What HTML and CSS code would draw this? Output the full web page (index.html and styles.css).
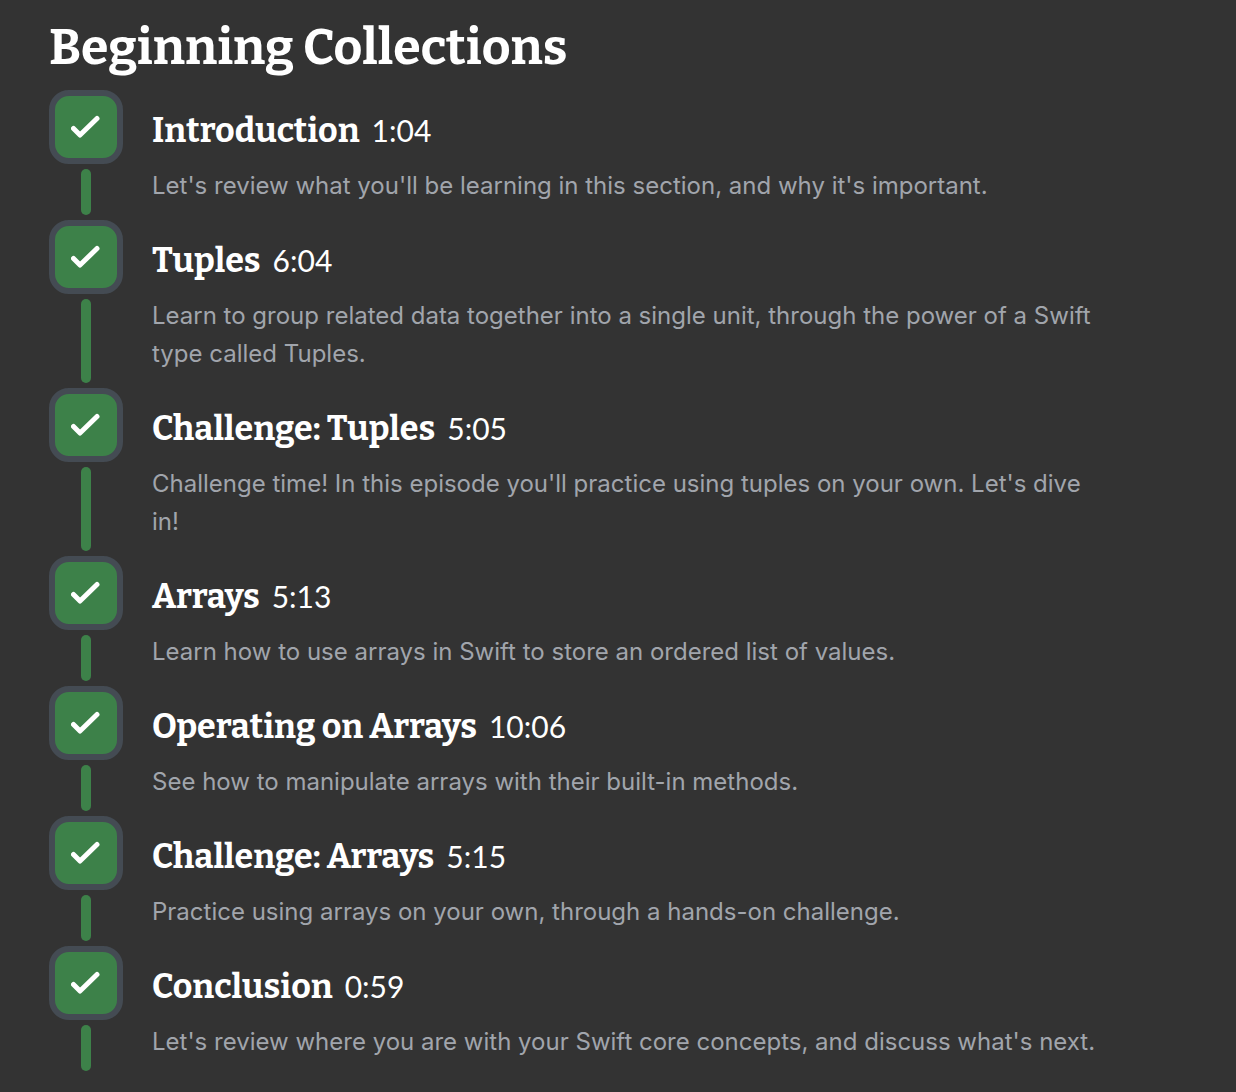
FILE: index.html
```html
<!DOCTYPE html>
<html lang="en">
<head>
<meta charset="utf-8">
<meta name="viewport" content="width=device-width, initial-scale=1">
<title>Beginning Collections</title>
<link rel="stylesheet" href="styles.css">
</head>
<body>
<svg class="sprite" aria-hidden="true">
  <symbol id="check" viewBox="0 0 30 24"><path d="M2.500 13.500L9 20L26 3.500"/></symbol>
</svg>
<main class="section">
  <h1 class="section-title">Beginning Collections</h1>
  <ol class="episodes">
    <li class="episode">
      <div class="progress"><span class="badge"><svg class="icon" role="img" aria-label="Completed"><use href="#check"/></svg></span><span class="track"></span></div>
      <div class="details">
        <div class="heading"><h2 class="name">Introduction</h2><span class="time">1:04</span></div>
        <p class="description">Let's review what you'll be learning in this section, and why it's important.</p>
      </div>
    </li>
    <li class="episode">
      <div class="progress"><span class="badge"><svg class="icon" role="img" aria-label="Completed"><use href="#check"/></svg></span><span class="track"></span></div>
      <div class="details">
        <div class="heading"><h2 class="name">Tuples</h2><span class="time">6:04</span></div>
        <p class="description">Learn to group related data together into a single unit, through the power of a Swift type called Tuples.</p>
      </div>
    </li>
    <li class="episode">
      <div class="progress"><span class="badge"><svg class="icon" role="img" aria-label="Completed"><use href="#check"/></svg></span><span class="track"></span></div>
      <div class="details">
        <div class="heading"><h2 class="name">Challenge: Tuples</h2><span class="time">5:05</span></div>
        <p class="description">Challenge time! In this episode you'll practice using tuples on your own. Let's dive in!</p>
      </div>
    </li>
    <li class="episode">
      <div class="progress"><span class="badge"><svg class="icon" role="img" aria-label="Completed"><use href="#check"/></svg></span><span class="track"></span></div>
      <div class="details">
        <div class="heading"><h2 class="name">Arrays</h2><span class="time">5:13</span></div>
        <p class="description">Learn how to use arrays in Swift to store an ordered list of values.</p>
      </div>
    </li>
    <li class="episode">
      <div class="progress"><span class="badge"><svg class="icon" role="img" aria-label="Completed"><use href="#check"/></svg></span><span class="track"></span></div>
      <div class="details">
        <div class="heading"><h2 class="name">Operating on Arrays</h2><span class="time">10:06</span></div>
        <p class="description">See how to manipulate arrays with their built-in methods.</p>
      </div>
    </li>
    <li class="episode">
      <div class="progress"><span class="badge"><svg class="icon" role="img" aria-label="Completed"><use href="#check"/></svg></span><span class="track"></span></div>
      <div class="details">
        <div class="heading"><h2 class="name">Challenge: Arrays</h2><span class="time">5:15</span></div>
        <p class="description">Practice using arrays on your own, through a hands-on challenge.</p>
      </div>
    </li>
    <li class="episode">
      <div class="progress"><span class="badge"><svg class="icon" role="img" aria-label="Completed"><use href="#check"/></svg></span><span class="track"></span></div>
      <div class="details">
        <div class="heading"><h2 class="name">Conclusion</h2><span class="time">0:59</span></div>
        <p class="description">Let's review where you are with your Swift core concepts, and discuss what's next.</p>
      </div>
    </li>
  </ol>
</main>
</body>
</html>
```
FILE: styles.css
```css
* {
  box-sizing: border-box;
}

body {
  margin: 0;
  background: #333333;
  color: #ffffff;
  font-family: Inter, "Liberation Sans", sans-serif;
}

.sprite {
  display: none;
}

.section {
  padding: 15px 132px 14px 49px;
}

.section-title,
.name {
  margin: 0;
  font-family: Bitter, "DejaVu Serif Condensed", "DejaVu Serif", serif;
  font-weight: 700;
}

.section-title {
  margin-bottom: 11px;
  font-size: 50px;
  line-height: 64px;
}

.episodes {
  margin: 0;
  padding: 0;
  list-style: none;
}

.episode {
  display: flex;
  gap: 29px;
}

.progress {
  display: flex;
  flex: none;
  flex-direction: column;
  align-items: center;
  gap: 5px;
  padding-bottom: 5px;
}

.badge {
  display: grid;
  place-items: center;
  width: 74px;
  height: 74px;
  border: 6px solid #444b53;
  border-radius: 20px;
  background: #3d8149;
}

.icon {
  width: 30px;
  height: 24px;
  fill: none;
  stroke: #ffffff;
  stroke-width: 5;
  stroke-linecap: round;
  stroke-linejoin: round;
}

.track {
  flex: 1;
  width: 10px;
  border-radius: 5px;
  background: #3d8149;
}

.details {
  flex: 1;
  padding: 19px 0 15px;
}

.heading {
  display: flex;
  align-items: baseline;
  gap: 12px;
  height: 44px;
  margin-bottom: 14px;
  line-height: 42px;
}

.name {
  font-size: 34px;
}

.time {
  font-family: Lato, sans-serif;
  font-size: 30px;
}

.description {
  margin: 0;
  color: #a1a5ac;
  font-size: 24px;
  line-height: 38px;
}
```
